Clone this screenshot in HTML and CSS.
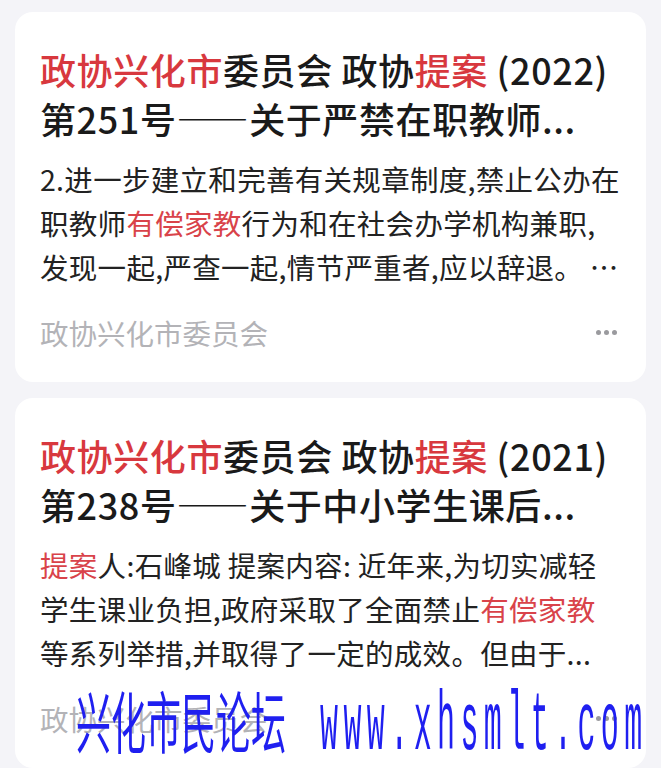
FILE: index.html
```html
<!DOCTYPE html>
<html lang="zh-CN">
<head>
    <meta charset="UTF-8">
    <meta name="viewport" content="width=device-width, initial-scale=1.0">
    <title>政协提案 - 搜索结果</title>
    <link rel="stylesheet" href="styles.css">
</head>
<body>
    <div class="results">
        <div class="card">
            <h2 class="title"><span class="hl">政协兴化市</span>委员会 政协<span class="hl">提案</span> (2022)<br>第251号——关于严禁在职教师...</h2>
            <p class="summary">2.进一步建立和完善有关规章制度,禁止公办在<br>职教师<span class="hl">有偿家教</span>行为和在社会办学机构兼职,<br>发现一起,严查一起,情节严重者,应以辞退。 …</p>
            <div class="meta">
                <span class="source">政协兴化市委员会</span>
                <span class="more" aria-label="更多"><i></i><i></i><i></i></span>
            </div>
        </div>
        <div class="card">
            <h2 class="title"><span class="hl">政协兴化市</span>委员会 政协<span class="hl">提案</span> (2021)<br>第238号——关于中小学生课后...</h2>
            <p class="summary"><span class="hl">提案</span>人:石峰城 提案内容: 近年来,为切实减轻<br>学生课业负担,政府采取了全面禁止<span class="hl">有偿家教</span><br>等系列举措,并取得了一定的成效。但由于...</p>
            <div class="meta">
                <span class="source">政协兴化市委员会</span>
                <span class="more" aria-label="更多"><i></i><i></i><i></i></span>
            </div>
        </div>
    </div>

    <div class="watermark"><span class="wm-cn">兴化市民论坛</span><span class="wm-url">www.xhsmlt.com</span></div>
</body>
</html>
```

FILE: styles.css
```css
body {
    font-family: "Noto Sans CJK SC", "Noto Sans", sans-serif;
    background-color: #f4f4f8;
    margin: 0;
    color: #222;
}

.results {
    display: flex;
    flex-direction: column;
    gap: 16px;
    padding: 12px 15px;
}

.card {
    background-color: #fff;
    border-radius: 18px;
    padding: 33px 25px 30px;
}

.title {
    margin: 0;
    font-size: 36px;
    line-height: 49px;
    font-weight: 500;
    letter-spacing: 0.6px;
    color: #1a1a1a;
    white-space: nowrap;
}

.hl {
    color: #d8383e;
}

.summary {
    margin: 14px 0 0;
    font-size: 28.5px;
    line-height: 44px;
    color: #222;
    letter-spacing: 0.3px;
    white-space: nowrap;
}

.summary .hl {
    color: #d9434a;
}

.meta {
    display: flex;
    justify-content: space-between;
    align-items: center;
    margin-top: 23px;
    height: 40px;
}

.source {
    font-size: 28.5px;
    color: #b3b3b7;
}

.more {
    display: flex;
    gap: 3px;
    margin-right: 4px;
}

.more i {
    width: 5px;
    height: 5px;
    border-radius: 50%;
    background-color: #9a9a9e;
}

/* forum watermark stamped over the screenshot */
.watermark {
    position: absolute;
    left: 76px;
    bottom: 16px;
    display: flex;
    align-items: flex-end;
    gap: 34px;
    color: #1f1ff0;
    pointer-events: none;
}

.wm-cn {
    font-size: 35px;
    font-weight: 400;
    line-height: 35px;
    transform: scaleY(1.9);
    transform-origin: bottom left;
}

.wm-url {
    font-family: "Liberation Mono", monospace;
    font-size: 30px;
    line-height: 30px;
    letter-spacing: 5.4px;
    transform: scaleY(2.8);
    transform-origin: bottom left;
    margin-bottom: -17px;
}
```
